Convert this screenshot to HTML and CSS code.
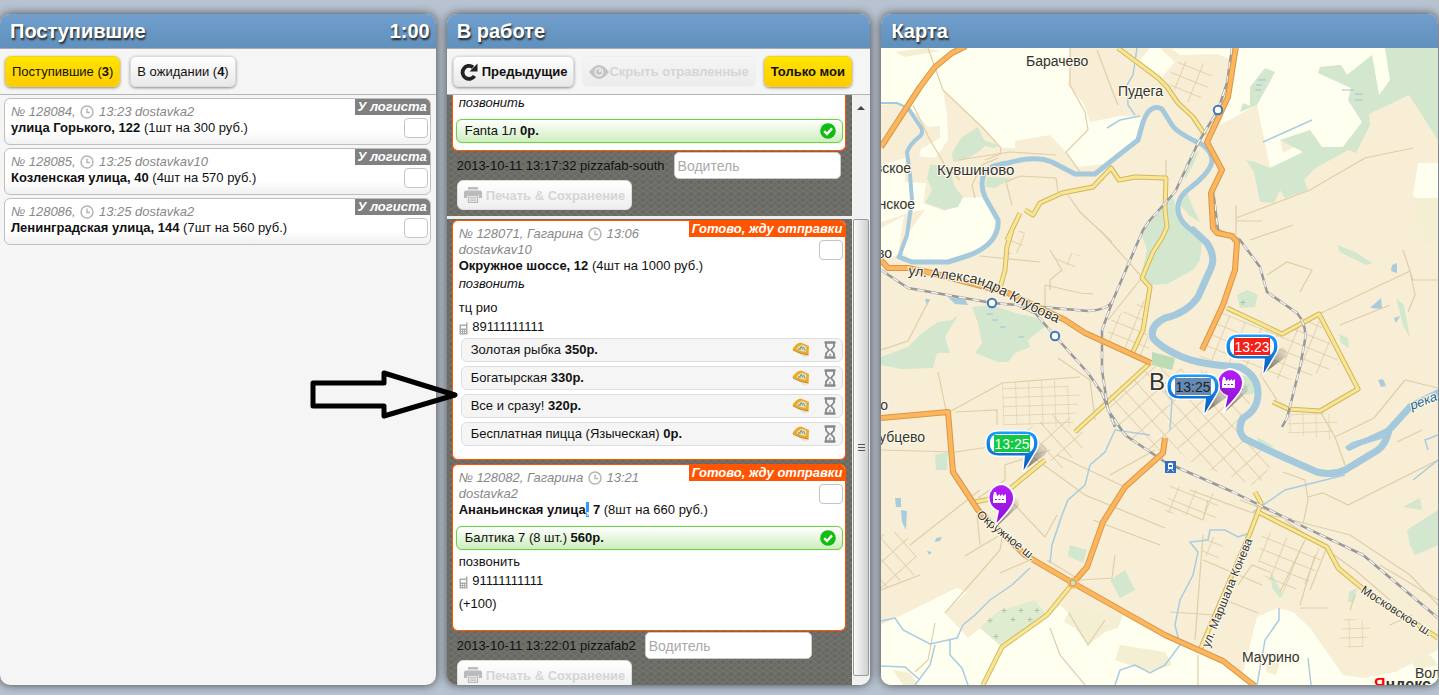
FILE: index.html
```html
<!DOCTYPE html>
<html lang="ru">
<head>
    <meta charset="UTF-8">
    <meta name="viewport" content="width=device-width, initial-scale=1.0">
    <link rel="stylesheet" href="styles.css">
    <title>Логист</title>
</head>
<body>
    <svg class="defs" width="0" height="0">
        <defs>
            <symbol id="clock" viewBox="0 0 14 14">
                <circle cx="7" cy="7" r="6" fill="#fff" stroke="#b5b5b5" stroke-width="1.5"/>
                <path d="M7 3.5V7.5H10" fill="none" stroke="#b5b5b5" stroke-width="1.4"/>
            </symbol>
            <symbol id="ok" viewBox="0 0 16 16">
                <circle cx="8" cy="8" r="7.8" fill="#10bd10"/>
                <path d="M4.2 8.2L7 11L12 5.4" fill="none" stroke="#fff" stroke-width="2.4"/>
            </symbol>
            <symbol id="phone" viewBox="0 0 9 13">
                <path d="M7 0.5h1.5v12h-8v-10h6.5z" fill="#aaa"/>
                <path d="M2 4h5v2.5h-5z" fill="#fff"/>
                <path d="M2 8h1v1h-1zM4 8h1v1h-1zM6 8h1v1h-1zM2 10h1v1h-1zM4 10h1v1h-1zM6 10h1v1h-1z" fill="#fff"/>
            </symbol>
            <symbol id="slice" viewBox="0 0 18 16">
                <path d="M3 9L12 15.5L15.5 14.5L17 10L6 6z" fill="#e4e6e0"/>
                <path d="M0.5 7.5C2 4 5 1 9 0.5L17 4L16.5 13C11 12 5 10 0.5 7.5z" fill="#f0a822"/>
                <path d="M4.5 7C6 4.5 8 3 10 2.8L14.5 4.8L14.2 9.8C10.5 9.6 7 8.5 4.5 7z" fill="#dfe3c2"/>
                <path d="M7.5 6.8L9.5 4.2L10.5 7.5M11.5 5L13 8.5M6 7h3" fill="none" stroke="#71907c" stroke-width="1"/>
                <path d="M1 8C6 10.5 11 12.5 16.5 13" fill="none" stroke="#c98514" stroke-width="1"/>
            </symbol>
            <symbol id="hourglass" viewBox="0 0 12 18">
                <path d="M0.5 1.5H11.5M0.5 16.5H11.5" stroke="#888" stroke-width="2.4"/>
                <path d="M2 2V5.5L5 9L2 12.5V16M10 2V5.5L7 9L10 12.5V16" fill="none" stroke="#888" stroke-width="1.8"/>
                <path d="M4.5 14.5L6 12.5L7.5 14.5z" fill="#888"/>
            </symbol>
            <symbol id="printer" viewBox="0 0 18 16">
                <path d="M4 0H14V2.5H4zM2 3.5H16Q18 3.5 18 5.5V11H15V8H3V11H0V5.5Q0 3.5 2 3.5z" fill="#bbb"/>
                <path d="M4.5 8.5H13.5V15.5H4.5z" fill="none" stroke="#bbb" stroke-width="1.4"/>
                <path d="M6 10.8H12M6 13.2H12" stroke="#bbb" stroke-width="1.3"/>
            </symbol>
        </defs>
    </svg>

    <main class="board">
        <section class="column">
            <header class="column-head"><h2>Поступившие</h2><span class="timer">1:00</span></header>
            <div class="toolbar">
                <button class="btn btn-active" type="button">Поступившие (<b>3</b>)</button>
                <button class="btn" type="button">В ожидании (<b>4</b>)</button>
            </div>
            <div class="incoming">
                <article class="order">
                    <span class="badge">У логиста</span>
                    <input class="check" type="checkbox" aria-label="Заказ 128084">
                    <p class="meta">№ 128084, <svg class="clock"><use href="#clock"/></svg> 13:23 dostavka2</p>
                    <p><b>улица Горького, 122</b> (1шт на 300 руб.)</p>
                </article>
                <article class="order">
                    <span class="badge">У логиста</span>
                    <input class="check" type="checkbox" aria-label="Заказ 128085">
                    <p class="meta">№ 128085, <svg class="clock"><use href="#clock"/></svg> 13:25 dostavkav10</p>
                    <p><b>Козленская улица, 40</b> (4шт на 570 руб.)</p>
                </article>
                <article class="order">
                    <span class="badge">У логиста</span>
                    <input class="check" type="checkbox" aria-label="Заказ 128086">
                    <p class="meta">№ 128086, <svg class="clock"><use href="#clock"/></svg> 13:25 dostavka2</p>
                    <p><b>Ленинградская улица, 144</b> (7шт на 560 руб.)</p>
                </article>
            </div>
        </section>

        <section class="column">
            <header class="column-head"><h2>В работе</h2></header>
            <div class="toolbar toolbar-work">
                <button class="btn" type="button"><svg class="icon-reload" viewBox="0 0 18 18"><path d="M14.5 13A6.5 6.5 0 1 1 13 4.2" fill="none" stroke="#222" stroke-width="3.8"/><path d="M17.5 0.5V8.5H9.5z" fill="#222"/></svg>Предыдущие</button>
                <button class="btn" type="button" disabled><svg class="icon-eye" viewBox="0 0 20 14"><path d="M0 7Q10 -7 20 7Q10 21 0 7z" fill="#c4c4c4"/><circle cx="10" cy="7" r="4.5" fill="#eee"/><circle cx="10" cy="7" r="3" fill="#c4c4c4"/><circle cx="11" cy="6" r="1.2" fill="#eee"/></svg>Скрыть отравленные</button>
                <button class="btn btn-active" type="button">Только мои</button>
            </div>
            <div class="work">
                <div class="work-list">
                    <div class="trip">
                        <article class="order order-ready order-cut">
                            <p><i>позвонить</i></p>
                            <ul class="items items-done">
                                <li><span>Fanta 1л <b>0р.</b></span><svg class="ok"><use href="#ok"/></svg></li>
                            </ul>
                        </article>
                        <div class="driver">
                            <label for="driver1">2013-10-11 13:17:32 pizzafab-south</label>
                            <input id="driver1" type="text" placeholder="Водитель">
                            <button class="btn btn-print" type="button" disabled><svg class="printer"><use href="#printer"/></svg>Печать &amp; Сохранение</button>
                        </div>
                    </div>
                    <div class="trip">
                        <article class="order order-ready">
                            <span class="badge">Готово, жду отправки</span>
                            <input class="check" type="checkbox" aria-label="Заказ 128071">
                            <p class="meta">№ 128071, Гагарина <svg class="clock"><use href="#clock"/></svg> 13:06 dostavkav10</p>
                            <p><b>Окружное шоссе, 12</b> (4шт на 1000 руб.)</p>
                            <p class="note"><i>позвонить</i></p>
                            <p class="place">тц рио</p>
                            <p class="tel"><svg class="phone"><use href="#phone"/></svg> 89111111111</p>
                            <ul class="items">
                                <li><span>Золотая рыбка <b>350р.</b></span><svg class="slice"><use href="#slice"/></svg><svg class="hourglass"><use href="#hourglass"/></svg></li>
                                <li><span>Богатырская <b>330р.</b></span><svg class="slice"><use href="#slice"/></svg><svg class="hourglass"><use href="#hourglass"/></svg></li>
                                <li><span>Все и сразу! <b>320р.</b></span><svg class="slice"><use href="#slice"/></svg><svg class="hourglass"><use href="#hourglass"/></svg></li>
                                <li><span>Бесплатная пицца (Языческая) <b>0р.</b></span><svg class="slice"><use href="#slice"/></svg><svg class="hourglass"><use href="#hourglass"/></svg></li>
                            </ul>
                        </article>
                        <article class="order order-ready">
                            <span class="badge">Готово, жду отправки</span>
                            <input class="check" type="checkbox" aria-label="Заказ 128082">
                            <p class="meta">№ 128082, Гагарина <svg class="clock"><use href="#clock"/></svg> 13:21 dostavka2</p>
                            <p><b>Ананьинская улица<span class="selected">,</span> 7</b> (8шт на 660 руб.)</p>
                            <ul class="items items-done">
                                <li><span>Балтика 7 (8 шт.) <b>560р.</b></span><svg class="ok"><use href="#ok"/></svg></li>
                            </ul>
                            <p class="call">позвонить</p>
                            <p class="tel"><svg class="phone"><use href="#phone"/></svg> 91111111111</p>
                            <p class="extra">(+100)</p>
                        </article>
                        <div class="driver">
                            <label for="driver2">2013-10-11 13:22:01 pizzafab2</label>
                            <input id="driver2" type="text" placeholder="Водитель">
                            <button class="btn btn-print" type="button" disabled><svg class="printer"><use href="#printer"/></svg>Печать &amp; Сохранение</button>
                        </div>
                    </div>
                </div>
                <div class="scrollbar"><div class="thumb"></div></div>
            </div>
        </section>

        <section class="column column-map">
            <header class="column-head"><h2>Карта</h2></header>
            <svg class="map" viewBox="881 48 557 637" preserveAspectRatio="xMinYMin slice">
                <defs>
                    <linearGradient id="pinBlue" x1="0" y1="0" x2="0" y2="1"><stop offset="0" stop-color="#1a9cff"/><stop offset="1" stop-color="#0358b8"/></linearGradient>
                    <linearGradient id="pinPurple" x1="0" y1="0" x2="0" y2="1"><stop offset="0" stop-color="#b41ef5"/><stop offset="1" stop-color="#8d10d8"/></linearGradient>
                    <linearGradient id="shade" x1="0" y1="1" x2="1" y2="0"><stop offset="0" stop-color="#222" stop-opacity="0.7"/><stop offset="1" stop-color="#222" stop-opacity="0"/></linearGradient>
                    <pattern id="blocksA" width="17" height="12" patternUnits="userSpaceOnUse" patternTransform="rotate(22)"><path d="M0 0H17M0 0V12" stroke="#dccba4" stroke-width="1.5" fill="none"/></pattern>
                    <pattern id="blocksB" width="14" height="19" patternUnits="userSpaceOnUse" patternTransform="rotate(-42)"><path d="M0 0H14M0 0V19" stroke="#dccba4" stroke-width="1.5" fill="none"/></pattern>
                    <pattern id="blocksC" width="13" height="9" patternUnits="userSpaceOnUse" patternTransform="rotate(-2)"><path d="M0 0H13M0 0V9" stroke="#e0d0aa" stroke-width="1.3" fill="none"/></pattern>
                    <g id="station"><circle r="4.2" fill="#fff" stroke="#3c78be" stroke-width="2"/></g>
                    <g id="bubble">
                        <path d="M39 40L61 24Q64 16 58 14L48 20z" fill="url(#shade)"/>
                        <path d="M14 1.5H40Q52.5 1.5 52.5 13.5Q52.5 18 49.5 22L38.5 40.5L40 25.5H14Q1.5 25.5 1.5 13.5Q1.5 1.5 14 1.5z" fill="#fff" stroke="#fff" stroke-width="3" stroke-linejoin="round"/>
                        <path d="M14 1.5H40Q52.5 1.5 52.5 13.5Q52.5 18 49.5 22L38.5 40.5L40 25.5H14Q1.500 25.5 1.5 13.5Q1.5 1.5 14 1.5z" fill="url(#pinBlue)"/>
                        <rect x="5" y="4" width="44" height="19" rx="8" fill="#fff"/>
                    </g>
                    <g id="factory">
                        <path d="M-3 28L19 8Q20 -2 10 0L3 6z" fill="url(#shade)"/>
                        <path d="M0 -14A14 14 0 0 1 13 5C11 12 2 20 -5 28L-2 13A14 14 0 0 1 0 -14z" fill="url(#pinPurple)" stroke="#fff" stroke-width="1.8"/>
                        <path d="M-7 5V-1L-6 -6H-4L-3 -2L0 -4V-2L3 -4V-2L6 -4V5z" fill="#fff"/>
                        <path d="M-5 1.5H5" stroke="#a018e0" stroke-width="1" stroke-dasharray="2 1.5"/>
                    </g>
                </defs>

                <rect x="881" y="48" width="557" height="637" fill="#f8edd5"/>

                <!-- fields -->
                <g fill="#fffff0">
                    <path d="M881 48H1070V70L1068 85L1084 104L1090 122L1086 135L1066 152L1050 135L1015 141V148L1001 148L983 128L943 90L947 115L948 140L935 158L919 156L921 149L940 138V126L928 127L912 110L897 103L881 105z"/>
                    <path d="M1066 152L1084 135L1090 122L1120 116L1143 117L1137 138L1105 164L1078 167z"/>
                    <path d="M881 165L905 158V182L926 183L923 203L945 211L957 198L988 197L998 217L990 240L980 248L948 261L910 260L900 250L907 235L925 210L908 212L900 216L881 222z"/>
                    <path d="M881 228L904 216L898 255L881 260z"/>
                    <path d="M1150 48H1160L1175 62L1162 77L1140 60zM1172 49H1232L1231 60L1218 54L1180 55z"/>
                    <path d="M1237 48H1385L1390 80L1379 95L1372 55L1347 75L1341 65L1320 67L1318 73L1351 88L1348 100L1362 122L1343 147H1322L1310 130L1280 140L1283 153L1297 146L1303 150L1297 160L1270 167L1257 105L1220 125L1232 87z"/>
                    <path d="M1418 163H1438V198H1422L1420 203L1413 195z"/>
                    <path d="M881 625L957 588L967 592L945 613L968 638L980 628L1002 647L1050 615L1060 605L1080 624L1122 615L1165 638L1200 654L1223 664L1243 672L1257 617L1278 608L1293 612L1310 628L1343 675L1363 678L1395 672L1438 650V685H881z"/>
                </g>
                <g fill="#f4efd2">
                    <path d="M1070 608L1123 615L1118 628L1105 632L1088 645L1075 628L1064 622zM1120 645L1165 652L1172 665L1150 672L1115 660zM893 670L910 673L918 685H903z"/>
                    <path d="M1413 198L1438 198V245L1423 243zM1265 664L1280 662L1276 675L1267 672zM1412 660L1430 655L1438 665L1415 670z"/>
                    <path d="M895 52L925 48L940 51L905 57z"/>
                </g>

                <!-- woods and parks -->
                <g fill="#d2e7cd">
                    <path d="M1372 55L1379 95L1390 80L1385 48H1438V140L1409 95L1369 114L1370 125L1356 153L1348 150L1314 169L1304 180L1308 190L1285 198L1280 190L1274 203L1260 202L1254 172L1246 160L1255 162L1270 168L1303 152L1280 140L1310 130L1322 147H1343L1362 122L1348 100L1351 88L1318 73L1320 67L1341 65L1347 75z"/>
                    <path d="M1250 87L1265 68L1275 72L1267 87L1257 105L1240 112L1243 103L1250 106z"/>
                    <path d="M952 153L962 137L978 127L984 140L998 145L995 148L985 146L978 152L965 160L953 162z"/>
                    <path d="M930 165L948 165L955 187L963 197L958 207L945 210L925 203L932 190L927 178zM987 177L1012 178L995 188L985 187z"/>
                    <path d="M1141 233L1165 205L1172 195L1180 215L1193 230L1202 243L1200 260L1193 270L1167 284L1150 285L1141 276L1147 250z"/>
                    <path d="M1180 205L1187 192L1193 208L1200 222L1190 216zM1185 165L1199 150L1193 165L1185 180z"/>
                    <path d="M972 307L992 305L1015 313L1038 318L1047 325L1028 340L1030 347L1015 353L1008 362H998L975 353L982 343L978 323z"/>
                    <path d="M881 357L908 347L922 333L938 322L952 320L958 315L945 337L950 353H937L933 368L901 369L881 365z"/>
                    <path d="M980 628L997 612L1035 600L1047 615L1002 647z" fill="#dfeccf"/>
                    <path d="M1237 295L1247 290L1258 295L1255 307L1240 308zM1337 245L1355 252L1372 263L1366 265L1340 252zM1396 298L1404 305L1410 338L1403 325zM1339 334L1348 338L1349 348L1341 343z"/>
                    <path d="M1152 352L1175 358L1172 370L1152 365z" fill="#bddbb5"/>
                    <path d="M1070 545L1087 550L1083 563L1068 556zM1407 530L1438 510V545L1415 555L1410 545zM1403 507L1420 498L1422 510zM1270 570L1283 595L1280 598L1272 588z"/>
                    <path d="M1240 375L1255 378L1257 393L1245 395zM1273 400L1285 404L1288 410L1275 403zM1257 437L1275 447L1260 446zM935 455L948 452L947 470H936zM1110 580L1125 570L1135 590L1120 598zM1349 592L1357 588L1354 602L1348 602z"/>
                </g>
                <g fill="#a9ccdd">
                    <path d="M895 498H901V507H896zM901 510L907 511L906 530L902 522zM936 538L942 537L940 541L935 542zM927 551L932 552L929 555zM1392 265L1397 263L1397 273L1391 271zM1370 308L1381 298L1382 309zM1378 380L1383 379L1386 386L1381 387zM1394 318L1400 316L1396 323zM948 297L965 299L968 305L955 304zM925 299H930L927 306z"/>
                    <path d="M1345 447L1352 442L1385 432L1392 428L1385 438L1362 445L1348 451z"/>
                </g>
                <path d="M990 618v5m-2.500-2.500h5M1004 608v5m-2.500-2.500h5M1021 608v5m-2.500-2.500h5M996 634v5m-2.500-2.500h5M1013 617v5m-2.500-2.500h5M1030 617v5m-2.500-2.500h5M1037 608v5m-2.500-2.500h5M1243 300v5m-2.500-2.500h5" stroke="#a9c5a4" fill="none"/>
                <path d="M1258 80h8M1256 85h6M1255 90h6M1342 90h12M1355 94h8M1355 100h8M986 314h7M992 320h6M1000 327h6M1018 337h6" stroke="#a5bde0" fill="none"/>

                <!-- town blocks -->
                <path d="M1112 318L1145 300L1148 335L1150 362L1130 355L1106 340z" fill="url(#blocksA)"/>
                <path d="M1215 310L1280 335L1318 318L1340 365L1300 380L1262 378L1240 367L1200 358z" fill="url(#blocksA)"/>
                <path d="M1110 392L1150 366L1240 374L1256 393L1238 428L1246 442L1275 458L1258 487L1190 462L1168 440L1162 455L1128 440L1108 408z" fill="url(#blocksB)"/>
                <path d="M1002 382L1060 380L1080 395L1072 428L1030 425L1003 425z" fill="url(#blocksC)"/>
                <path d="M1025 430L1062 410L1090 440L1060 470L1045 455z" fill="url(#blocksB)"/>
                <path d="M1170 485L1220 495L1215 520L1165 512zM1205 535L1225 540L1218 560L1202 555zM1262 530L1325 550L1312 580L1285 595L1258 570z" fill="url(#blocksA)"/>
                <path d="M1345 618L1372 622L1362 650L1338 645zM1287 410L1340 415L1330 440L1288 433z" fill="url(#blocksC)"/>
                <path d="M1010 232L1025 230L1022 252L1005 255zM1057 250L1080 255L1075 268L1055 262zM1180 60L1215 65L1205 95L1190 105L1165 80z" fill="url(#blocksA)"/>
                <path d="M881 535L905 530L918 560L915 575L881 590z" fill="url(#blocksB)"/>

                <!-- lanes -->
                <g fill="none" stroke="#dfcfa8" stroke-width="1.2">
                    <path d="M928 48L943 90L983 128L1001 148L1000 154L985 160M913 105L930 140L945 165L960 180M1070 48L1070 85L1085 112L1088 130L1066 152L1080 172M1097 50L1112 90L1118 105"/>
                    <path d="M1006 182L1020 176L1056 178L1058 192M1006 182L1012 205M1068 195L1080 212L1112 242M958 160L1010 152L1056 155M975 198L972 185L982 165L998 158"/>
                    <path d="M1236 218L1310 190L1365 158L1413 148M1236 205V235M1236 221H1262M1250 240L1293 225M1166 160V190"/>
                    <path d="M1050 250L1062 270L1050 280V290M980 256L1040 262M1045 285V310M1045 285L1080 293L1093 294M1100 230L1140 275M1058 358L1090 380L1095 420M1108 320L1140 280"/>
                    <path d="M881 350L908 341L928 302M938 372L946 410M951 411L1002 383L1080 377M955 412L997 410V425M881 450L955 452L1003 445M978 498L1005 480V465L1050 450M910 545L980 490M977 515L980 545M965 556L1000 535M881 590L920 575M945 613L1000 550L1003 530M1000 573L1030 560M1010 500L1045 537L1057 515"/>
                    <path d="M1030 455L1085 495L1165 528M1057 455L1125 487M1110 475L1155 450M1093 520L1160 545M1047 560L1080 580L1112 578L1115 555M1050 628L1060 655L1085 685M1069 613L1088 645L1105 620M935 623L928 660L915 672M1198 655V685"/>
                    <path d="M1267 275L1287 262L1312 270L1300 292M1319 314L1410 271L1413 280H1438M1403 250L1410 271L1415 295L1408 312M1340 325L1390 305M1262 377L1277 400M1335 437L1374 418L1405 380L1438 388M1335 437L1345 465M1320 411L1335 437"/>
                    <path d="M1240 500L1292 520L1350 535L1410 575L1438 605M1283 472L1305 480L1308 500L1303 524M1308 497L1323 493L1348 505L1438 460M1292 519L1250 512L1190 490M1150 498L1203 520L1208 500M1203 535L1195 640M1225 600L1258 613M1203 560L1262 585M1305 540L1280 592M1300 605L1315 555M1300 608H1328"/>
                    <path d="M1285 520L1355 570L1390 600M1327 547L1310 590M1238 585L1252 565L1270 572M1170 612L1215 615M1380 565L1438 600M1390 625L1412 615M1397 442L1422 430M1350 610L1355 595"/>
                </g>

                <!-- small streams -->
                <g fill="none" stroke="#a9cde0" stroke-width="1.5">
                    <path d="M1137 48L1133 75L1127 85L1128 105L1135 115M1107 128L1120 120L1140 116M1263 142L1312 120"/>
                    <path d="M1050 563L1052 545L1062 515L1068 500L1085 485L1090 465M1030 568L1012 585L990 600L975 615L963 625L957 638L930 644L903 630L895 618L881 621M950 640V655L962 668L968 685M935 645L930 665L915 685M881 666L905 667L920 680"/>
                    <path d="M1090 465L1105 452L1115 430L1150 435M1170 430L1172 400L1165 390M1250 533L1238 537L1225 530L1210 530L1208 540L1190 542L1198 552L1193 575L1180 600L1175 625L1180 645L1165 665L1150 673L1135 665L1120 670L1115 685"/>
                    <path d="M1253 512L1285 490L1325 480L1345 475M1279 608V620L1265 640L1257 685M1308 658L1311 685M1413 480L1438 460M1438 435L1425 440L1428 450"/>
                </g>

                <!-- river -->
                <g fill="none" stroke="#a4c9dc" stroke-linecap="round" stroke-linejoin="round">
                    <path d="M881 103H897L908 108" stroke-width="2"/>
                    <path d="M908 108L920 126Q925 133 918 138T907 152L910 175L912 200L907 235L899 257" stroke-width="4"/>
                    <path d="M899 257L912 262H948L970 255Q985 249 992 240T998 220L985 197Q979 183 985 172Q990 165 1008 163Q1035 155 1052 162L1075 174H1095L1115 158L1138 140L1143 122Q1150 103 1162 109L1172 125Q1177 133 1203 145Q1215 155 1211 165T1190 188Q1177 197 1178 210T1196 233" stroke-width="5"/>
                    <path d="M1193 230L1207 243Q1216 257 1211 268L1198 297Q1187 313 1165 318Q1149 326 1153 338Q1160 347 1180 356T1240 367Q1258 376 1258 393T1243 418Q1236 431 1245 439L1283 457L1317 472Q1332 476 1345 470L1378 450Q1386 444 1389 430L1410 407L1438 393" stroke-width="7"/>
                    <path d="M1350 449L1390 430M1360 442L1390 428" stroke-width="3"/>
                </g>

                <!-- yellow roads -->
                <g fill="none" stroke-linejoin="round">
                    <path d="M1118 48L1158 78L1167 87L1178 103L1193 117L1205 135M1007 240L1020 213M1025 210L1033 215L1040 203L1062 193L1093 187L1111 168L1119 180L1135 177L1166 178L1165 210L1167 227L1162 238L1153 252L1142 278L1150 287L1143 330L1133 352M1012 230L1007 247L1005 270L1000 288M1150 363L1075 432M1227 308L1282 334L1319 314L1358 389L1320 411L1288 409L1273 402M1045 460L1000 497L975 502M1073 583L1047 615L1002 647L983 685M1255 492L1261 503L1258 512L1250 533L1200 650M1258 512L1327 547L1338 568L1362 588L1438 638" stroke="#cdb868" stroke-width="5"/>
                    <path d="M1118 48L1158 78L1167 87L1178 103L1193 117L1205 135M1007 240L1020 213M1025 210L1033 215L1040 203L1062 193L1093 187L1111 168L1119 180L1135 177L1166 178L1165 210L1167 227L1162 238L1153 252L1142 278L1150 287L1143 330L1133 352M1012 230L1007 247L1005 270L1000 288M1150 363L1075 432M1227 308L1282 334L1319 314L1358 389L1320 411L1288 409L1273 402M1045 460L1000 497L975 502M1073 583L1047 615L1002 647L983 685M1255 492L1261 503L1258 512L1250 533L1200 650M1258 512L1327 547L1338 568L1362 588L1438 638" stroke="#fbe68f" stroke-width="3"/>
                </g>

                <!-- railways -->
                <g fill="none" stroke-linejoin="round">
                    <path d="M1232 48L1227 83L1218 110L1198 143L1175 192L1150 220L1143 230L1113 300L1102 330V370L1108 410L1125 435L1165 462L1233 492L1300 525L1363 555L1438 618M881 270L908 288L992 303L1018 305L1035 313L1055 336L1088 373L1102 393L1115 427M1018 305L1088 311Q1108 310 1113 300M1207 142L1221 168M1213 190L1218 230L1240 240L1260 267L1267 292L1297 313Q1307 325 1305 340L1300 367L1287 418L1282 427" stroke="#999" stroke-width="2.5"/>
                    <path d="M1232 48L1227 83L1218 110L1198 143L1175 192L1150 220L1143 230L1113 300L1102 330V370L1108 410L1125 435L1165 462L1233 492L1300 525L1363 555L1438 618M881 270L908 288L992 303L1018 305L1035 313L1055 336L1088 373L1102 393L1115 427M1018 305L1088 311Q1108 310 1113 300M1207 142L1221 168M1213 190L1218 230L1240 240L1260 267L1267 292L1297 313Q1307 325 1305 340L1300 367L1287 418L1282 427" stroke="#f4f4f4" stroke-width="1.5" stroke-dasharray="7 7"/>
                </g>

                <!-- highways -->
                <g fill="none" stroke-linejoin="round">
                    <path d="M966 46L952 53L935 67L920 87L881 147M1236 46L1228 97L1207 142L1222 170L1211 193L1213 228L1217 233L1232 236L1237 242L1235 270L1223 305L1202 350M881 260L888 268L908 268L932 273L1008 293L1065 320L1085 333L1151 363M881 418L948 412L953 472L978 510L1025 555L1073 583L1165 635L1223 661L1255 686M1073 583L1087 567L1103 522L1125 487L1163 453L1165 438" stroke="#d7974a" stroke-width="6"/>
                    <path d="M966 46L952 53L935 67L920 87L881 147M1236 46L1228 97L1207 142L1222 170L1211 193L1213 228L1217 233L1232 236L1237 242L1235 270L1223 305L1202 350M881 260L888 268L908 268L932 273L1008 293L1065 320L1085 333L1151 363M881 418L948 412L953 472L978 510L1025 555L1073 583L1165 635L1223 661L1255 686M1073 583L1087 567L1103 522L1125 487L1163 453L1165 438" stroke="#fdb65c" stroke-width="4"/>
                    <circle cx="1073" cy="583" r="4" fill="#cfe3c3" stroke="#fdb65c" stroke-width="3"/>
                    <circle cx="1073" cy="583" r="3" stroke="#c99b56"/>
                </g>

                <use href="#station" x="1218" y="110"/>
                <use href="#station" x="992" y="303"/>
                <use href="#station" x="1055" y="336"/>
                <g transform="translate(1165 461)">
                    <rect width="11" height="12" fill="#2f6fc0"/>
                    <path d="M3 2.5Q5.5 1 8 2.5V8H3z" fill="#fff"/>
                    <path d="M2.5 10.5L4 8.5M8.5 10.5L7 8.5" stroke="#fff"/>
                    <path d="M4 4H7V6H4z" fill="#2f6fc0"/>
                </g>

                <!-- labels -->
                <path id="streetKlubova" d="M908 275C940 279 972 280 992 290S1032 313 1080 333" fill="none"/>
                <g class="map-labels">
                    <text x="1026" y="66">Барачево</text>
                    <text x="1118" y="96">Пудега</text>
                    <text x="937" y="175" class="label-town">Кувшиново</text>
                    <text x="911" y="173" text-anchor="end">вское</text>
                    <text x="915" y="209" text-anchor="end">нское</text>
                    <text x="892" y="258" text-anchor="end">во</text>
                    <text x="888" y="410" text-anchor="end">о</text>
                    <text x="925" y="442" text-anchor="end">убцево</text>
                    <text x="1149" y="390" class="label-city">В</text>
                    <text x="1240" y="390" class="label-town">.</text>
                    <text x="1242" y="662">Маурино</text>
                    <text x="1415" y="678">Вол</text>
                    <text><textPath href="#streetKlubova">ул. Александра Клубова</textPath></text>
                    <text class="label-street" transform="translate(976 516) rotate(39)">Окружное ш.</text>
                    <text class="label-street" transform="translate(1209 648) rotate(-68)">ул. Маршала Конева</text>
                    <text class="label-street" transform="translate(1360 592) rotate(33)">Московское ш.</text>
                    <text class="label-river" transform="translate(1412 410) rotate(-21)">река</text>
                    <text x="1374" y="690" class="label-brand"><tspan fill="#f00">Я</tspan>ндекс</text>
                </g>

                <!-- pins -->
                <use href="#factory" x="1000" y="498"/>
                <use href="#factory" x="1229" y="383"/>
                <g class="pin" transform="translate(1225 333)"><use href="#bubble"/><rect x="9" y="5" width="36" height="17" fill="#f3201a"/><text x="27" y="19" fill="#fff">13:23</text></g>
                <g class="pin" transform="translate(1166 373)"><use href="#bubble"/><rect x="9" y="5" width="36" height="17" fill="#6389b5"/><text x="27" y="19" fill="#222">13:25</text></g>
                <g class="pin" transform="translate(985 430)"><use href="#bubble"/><rect x="9" y="5" width="36" height="17" fill="#12c943"/><text x="27" y="19" fill="#fff">13:25</text></g>
            </svg>
        </section>
    </main>

    <svg class="pointer" viewBox="310 369 149 51"><path d="M313 383H384V373L455 395L384 416V406H313z" fill="none" stroke="#000" stroke-width="5" stroke-linejoin="round"/></svg>
</body>
</html>
```

FILE: styles.css
```css
* {
    box-sizing: border-box;
}

body {
    margin: 0;
    background-color: #b7c3d0;
    font-family: "Liberation Sans", Arial, sans-serif;
    font-size: 13px;
    line-height: 16px;
    color: #111;
    overflow: hidden;
}

h2, p, ul {
    margin: 0;
    padding: 0;
}

.defs {
    position: absolute;
}

.board {
    display: grid;
    grid-template-columns: 436fr 424fr 557fr;
    gap: 11px;
    height: 100vh;
    padding: 14px 1px 10px 0;
}

.column {
    display: flex;
    flex-direction: column;
    min-width: 0;
    min-height: 0;
    overflow: hidden;
    background-color: #f5f5f5;
    border-radius: 10px;
    box-shadow: 0 0 10px #444;
}

.column-head {
    display: flex;
    justify-content: space-between;
    flex: none;
    height: 35px;
    padding: 0 6px 0 10px;
    background: linear-gradient(#729fcd, #6190bd);
    border-bottom: 1px solid #a9adb1;
    color: #fff;
    font-size: 20px;
    font-weight: bold;
    line-height: 35px;
    text-shadow: 1px 2px 2px #222;
}

.column-map .column-head {
    height: 34px;
    border: none;
}

.column-head h2 {
    font-size: 20px;
}

.toolbar {
    display: flex;
    flex: none;
    gap: 10px;
    height: 46px;
    padding: 7px 5px;
    border-bottom: 1px solid #b5b5b5;
}

.toolbar-work {
    gap: 8px;
    padding-left: 6px;
}

.toolbar-work .btn {
    font-weight: bold;
}

.btn {
    display: flex;
    align-items: center;
    height: 31px;
    padding: 0 6px;
    background: linear-gradient(#fff, #e8e8e8);
    border: 1px solid #ddd;
    border-radius: 6px;
    box-shadow: 0 1px 3px #888;
    font: 13px "Liberation Sans", Arial, sans-serif;
    color: #111;
    white-space: nowrap;
}

.btn-active {
    background: linear-gradient(#ffe500, #ffcb00);
    border-color: #f7cf1c;
}

.btn:disabled {
    background: linear-gradient(#f5f5f5, #ececec);
    border-color: #f0f0f0;
    box-shadow: none;
    color: #d5d5d5;
}

.icon-reload {
    width: 18px;
    height: 18px;
    margin-right: 4px;
}

.icon-eye {
    width: 20px;
    height: 14px;
}

.incoming {
    display: flex;
    flex-direction: column;
    gap: 3px;
    padding: 3px 5px 3px 4px;
}

.order {
    min-height: 47px;
    padding: 5px 6px 6px;
    background: linear-gradient(#fff 70%, #f1f1f1);
    border: 1px solid #bfbfbf;
    border-radius: 6px;
    overflow: hidden;
}

.meta {
    color: #888;
    font-style: italic;
}

.clock {
    width: 14px;
    height: 14px;
    margin: 0 1px;
    vertical-align: -3px;
}

.badge {
    float: right;
    margin: -5px -6px 0 0;
    padding: 0 3px;
    background-color: #808080;
    color: #fff;
    font-weight: bold;
    font-style: italic;
}

.check {
    appearance: none;
    float: right;
    clear: right;
    width: 24px;
    height: 20px;
    margin: 3px -4px 0 0;
    background-color: #fff;
    border: 1px solid #c4c4c4;
    border-radius: 4px;
}

.work {
    display: flex;
    flex: 1;
    min-height: 0;
}

.work-list {
    flex: 1;
    min-width: 0;
    overflow: hidden;
    background-color: #72736d;
    background-image: radial-gradient(#666762 30%, transparent 50%), radial-gradient(#696a64 30%, transparent 50%);
    background-size: 8px 6px;
    background-position: 0 0, 4px 3px;
}

.trip {
    display: flex;
    flex-direction: column;
    gap: 4px;
    padding: 1px 6px 6px 5px;
}

.trip:first-child {
    padding-top: 0;
}

.trip + .trip {
    border-top: 3px solid #eee;
}

.order-ready {
    padding-bottom: 13px;
    background: #fff;
    border-color: #ff5500;
    box-shadow: 0 0 1px #ff5500;
}

.order-cut {
    min-height: 0;
    padding-top: 0;
    padding-bottom: 7px;
    border-top: none;
    border-radius: 0 0 6px 6px;
}

.order-ready .badge {
    background-color: #ff5500;
}

.note {
    padding-top: 2px;
}

.place {
    padding-top: 8px;
}

.tel {
    padding-top: 3px;
}

.call {
    padding-top: 4px;
}

.extra {
    padding: 7px 0 5px;
}

.phone {
    width: 9px;
    height: 13px;
    margin-right: 1px;
    vertical-align: -4px;
}

.selected {
    background-color: #3399ff;
    color: #fff;
}

.items {
    display: flex;
    flex-direction: column;
    gap: 4px;
    margin: 3px -4px 0 2px;
    list-style: none;
}

.items li {
    display: flex;
    align-items: center;
    height: 24px;
    padding: 0 6px 0 9px;
    background-color: #f5f5f5;
    border: 1px solid #ddd;
    border-radius: 6px;
}

.items span {
    flex: 1;
}

.items-done {
    margin: 8px -4px 0 -3px;
}

.items-done li {
    padding-left: 8px;
    background: linear-gradient(#fff, #cdeebf);
    border: 1px solid #6fcf45;
    box-shadow: 0 0 1px #6fcf45;
}

.ok {
    width: 16px;
    height: 16px;
}

.slice {
    width: 18px;
    height: 16px;
    margin-right: 14px;
}

.hourglass {
    width: 12px;
    height: 18px;
}

.driver {
    display: flex;
    flex-wrap: wrap;
    align-items: center;
    gap: 1px 9px;
    margin-top: -3px;
    padding-left: 5px;
}

.driver input {
    width: 167px;
    height: 27px;
    padding: 0 3px;
    background-color: #fff;
    border: 1px solid #ccc;
    border-radius: 5px;
    font: 14px "Liberation Sans", Arial, sans-serif;
}

.driver input::placeholder {
    color: #aaa;
}

.btn-print {
    height: 30px;
    font-weight: bold;
}

.btn-print:disabled {
    background: linear-gradient(#fff, #eee);
    border-color: #ddd;
}

.printer {
    width: 18px;
    height: 16px;
    margin-right: 4px;
}

.scrollbar {
    display: flex;
    flex-direction: column;
    flex: none;
    width: 18px;
    padding: 0 1px 9px;
    background-color: #f1f1f1;
}

.scrollbar::before {
    content: "";
    height: 11px;
    margin: 0 4px 109px;
    border: 4px solid transparent;
    border-top: none;
    border-bottom: 4px solid #444;
}

.thumb {
    display: flex;
    align-items: center;
    justify-content: center;
    flex: 1;
    background: linear-gradient(90deg, #fafafa, #d0d0d0);
    border: 1px solid #999;
    border-radius: 2px;
}

.thumb::before {
    content: "";
    width: 7px;
    height: 8px;
    background: repeating-linear-gradient(#555 0 1px, transparent 1px 3px);
}

.map {
    flex: 1;
    width: 100%;
    min-height: 0;
}

.map-labels {
    font-size: 14px;
    fill: #333;
    paint-order: stroke;
    stroke: #fffbea;
    stroke-width: 2px;
}

.label-town {
    font-size: 15px;
}

.label-city {
    font-size: 24px;
}

.label-street {
    font-size: 12px;
}

.label-river {
    font-size: 13px;
    font-style: italic;
    fill: #24628c;
}

.label-brand {
    font-size: 16px;
    font-weight: bold;
}

.pin text {
    font-size: 14px;
    text-anchor: middle;
}

/* arrow drawn over the board */
.pointer {
    position: absolute;
    top: 369px;
    left: 310px;
    width: 149px;
    height: 51px;
    pointer-events: none;
}
```
